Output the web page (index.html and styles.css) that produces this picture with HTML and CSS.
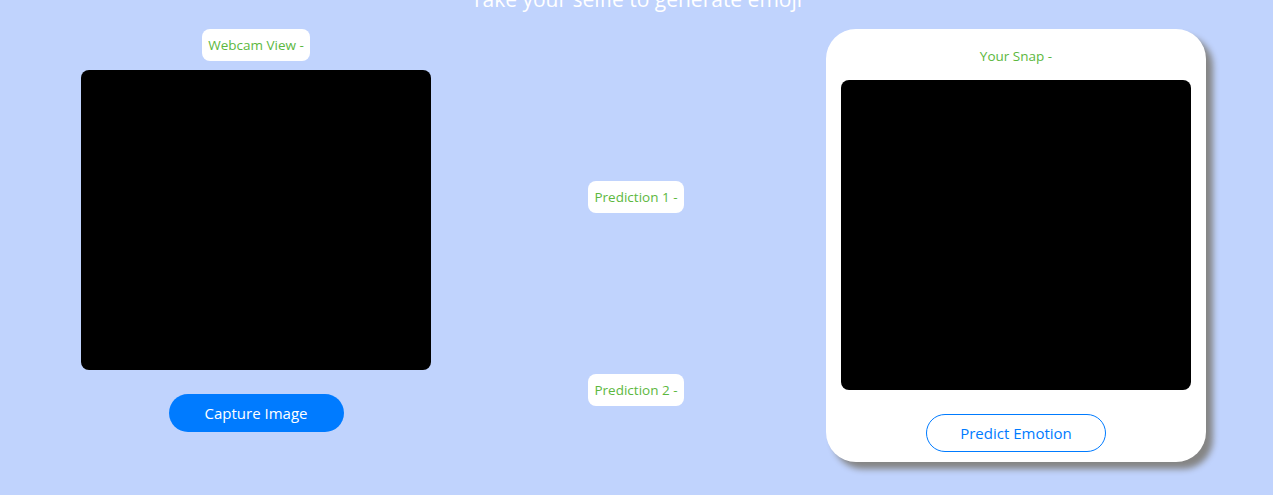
FILE: index.html
```html
<!DOCTYPE html>
<html>
<head>
<meta charset="utf-8">
<link rel="stylesheet" href="styles.css">
</head>
<body>
<h1 class="title">Take your selfie to generate emoji</h1>
<div class="row">
  <div class="col col-left">
    <div class="tag">Webcam View -</div>
    <div class="screen screen-webcam"></div>
    <button class="btn btn-solid">Capture Image</button>
  </div>
  <div class="col col-mid">
    <div class="tag">Prediction 1 -</div>
    <div class="tag tag-second">Prediction 2 -</div>
  </div>
  <div class="col col-right">
    <div class="card">
      <div class="card-title">Your Snap -</div>
      <div class="screen screen-snap"></div>
      <button class="btn btn-outline">Predict Emotion</button>
    </div>
  </div>
</div>
</body>
</html>
```
FILE: styles.css
```css
html, body {
  margin: 0;
  padding: 0;
  background: #c0d3fd;
  height: 100%;
  overflow: hidden;
}
body {
  font-family: "Open Sans", "Noto Sans", sans-serif;
}
.title {
  margin: -15px 0 0 0;
  height: 44px;
  text-align: center;
  color: #ffffff;
  font-weight: 400;
  font-size: 21px;
  line-height: 28px;
}
.row {
  width: 1140px;
  margin: 0 0 0 66px;
  display: grid;
  grid-template-columns: 380px 380px 380px;
}
.col {
  display: flex;
  flex-direction: column;
  align-items: center;
}
.tag {
  background: #ffffff;
  color: #5cb83e;
  border-radius: 8px;
  font-size: 13.5px;
  height: 32px;
  line-height: 32px;
  padding: 0 6px;
}
.screen {
  background: #000;
  border-radius: 8px;
  width: 350px;
}
.screen-webcam {
  height: 300px;
  margin-top: 9px;
}
.btn {
  font-family: inherit;
  font-size: 15px;
  height: 38px;
  border-radius: 19px;
  cursor: pointer;
  padding: 0;
}
.btn-solid {
  margin-top: 24px;
  width: 175px;
  background: #007bff;
  color: #fff;
  border: none;
}
.col-mid .tag {
  margin-top: 152px;
}
.col-mid .tag.tag-second {
  margin-top: 161px;
}
.card {
  width: 380px;
  height: 433px;
  box-sizing: border-box;
  background: #fff;
  border-radius: 30px;
  box-shadow: 7px 7px 6px #858585;
  display: flex;
  flex-direction: column;
  align-items: center;
}
.card-title {
  color: #5cb83e;
  font-size: 13.5px;
  margin-top: 17px;
  line-height: 20px;
}
.screen-snap {
  height: 310px;
  margin-top: 14px;
}
.btn-outline {
  margin-top: 24px;
  width: 180px;
  background: #fff;
  color: #007bff;
  border: 1px solid #007bff;
}
```
